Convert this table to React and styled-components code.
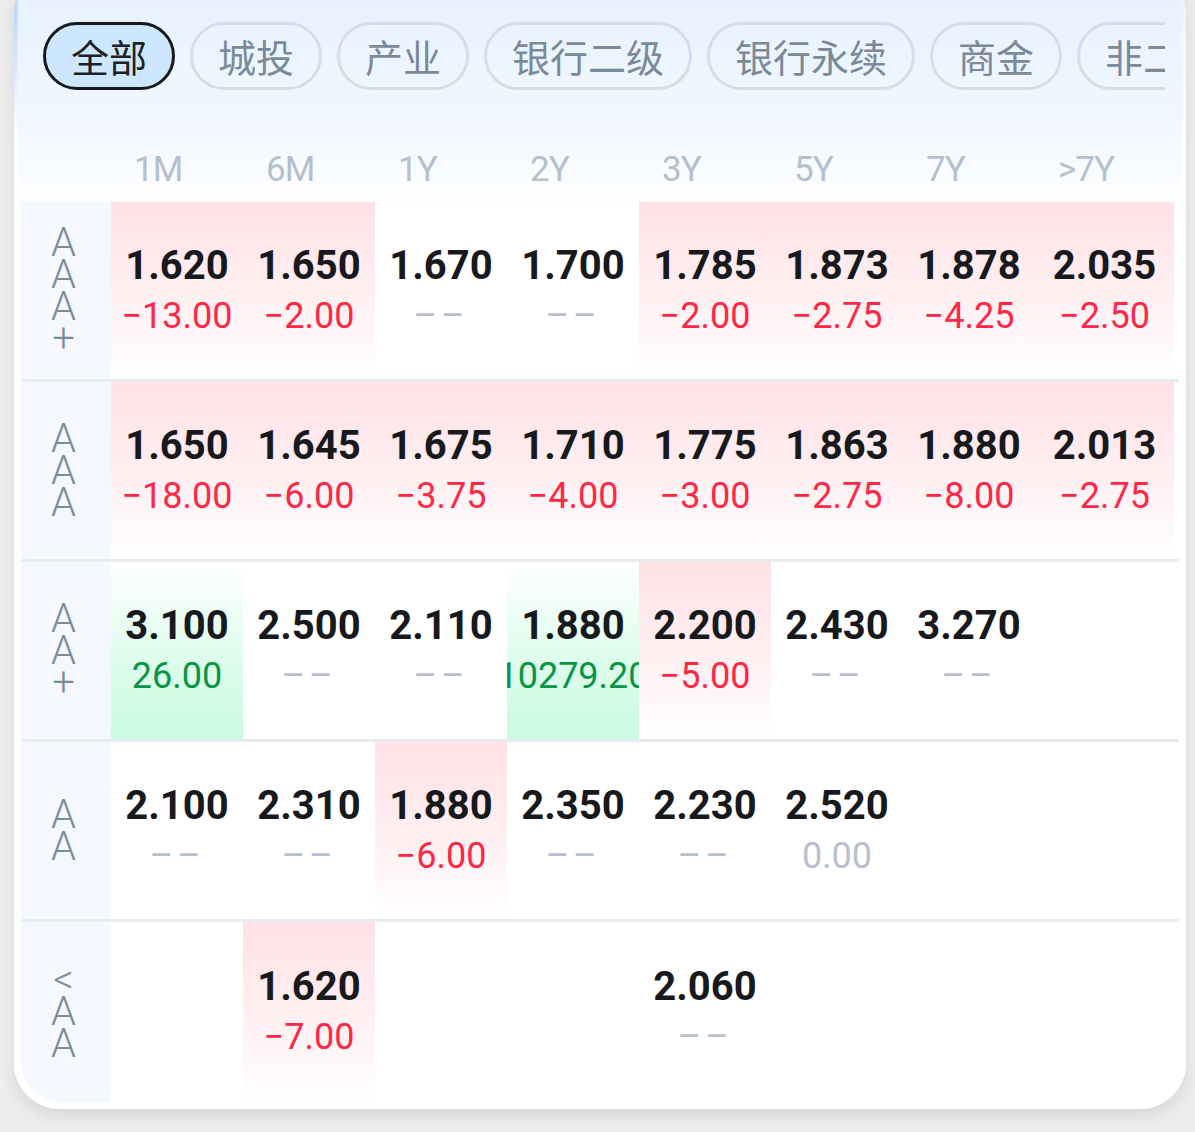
import React from 'react';
import styled, { createGlobalStyle } from 'styled-components';

const GlobalStyle = createGlobalStyle`
  html, body {
    margin: 0;
    padding: 0;
    background: #ededed;
  }
  body {
    font-family: Roboto, "Noto Sans CJK SC", sans-serif;
    overflow: hidden;
  }
`;

const TABS = ['全部', '城投', '产业', '银行二级', '银行永续', '商金', '非二永'];
const TERMS = ['1M', '6M', '1Y', '2Y', '3Y', '5Y', '7Y', '>7Y'];

// each cell: [yield, change, tone]; tone 'up' = pink, 'down' = green
const ROWS = [
    {
        label: 'AAA+',
        cells: [
            ['1.620', '-13.00', 'up'], ['1.650', '-2.00', 'up'], ['1.670', '--'], ['1.700', '--'],
            ['1.785', '-2.00', 'up'], ['1.873', '-2.75', 'up'], ['1.878', '-4.25', 'up'], ['2.035', '-2.50', 'up'],
        ],
    },
    {
        label: 'AAA',
        cells: [
            ['1.650', '-18.00', 'up'], ['1.645', '-6.00', 'up'], ['1.675', '-3.75', 'up'], ['1.710', '-4.00', 'up'],
            ['1.775', '-3.00', 'up'], ['1.863', '-2.75', 'up'], ['1.880', '-8.00', 'up'], ['2.013', '-2.75', 'up'],
        ],
    },
    {
        label: 'AA+',
        cells: [
            ['3.100', '26.00', 'down'], ['2.500', '--'], ['2.110', '--'], ['1.880', '10279.20', 'down'],
            ['2.200', '-5.00', 'up'], ['2.430', '--'], ['3.270', '--'], null,
        ],
    },
    {
        label: 'AA',
        cells: [
            ['2.100', '--'], ['2.310', '--'], ['1.880', '-6.00', 'up'], ['2.350', '--'],
            ['2.230', '--'], ['2.520', '0.00'], null, null,
        ],
    },
    {
        label: '<AA',
        cells: [
            null, ['1.620', '-7.00', 'up'], null, null,
            ['2.060', '--'], null, null, null,
        ],
    },
];

const COLS = '90px repeat(7, 132px) 139px';

const changeKind = (c) => {
    if (c === '--') return 'none';
    if (Number(c) === 0) return 'flat';
    return c.startsWith('-') ? 'neg' : 'pos';
};

const showChange = (c) => {
    if (c === '--') return '––';
    return c.replace('-', '−');
};

class App extends React.Component {

    renderCell(cell, i) {
        if (!cell) {
            return <ValueCell key={i} />;
        }
        const [value, change, tone] = cell;
        return (
            <ValueCell key={i} tone={tone}>
                <Yield>{value}</Yield>
                <Change kind={changeKind(change)}>{showChange(change)}</Change>
            </ValueCell>
        );
    }

    renderRow(row, idx) {
        return (
            <Row key={row.label} first={idx === 0} last={idx === ROWS.length - 1}>
                <LabelCell>
                    <LabelText>{row.label}</LabelText>
                </LabelCell>
                {row.cells.map((c, i) => this.renderCell(c, i))}
            </Row>
        );
    }

    render() {
        return (
            <Page>
                <GlobalStyle />
                <Card>
                    <Inner>
                        <TabBar>
                            {TABS.map((t, i) => (
                                <Tab key={t} active={i === 0}>{t}</Tab>
                            ))}
                        </TabBar>
                        <HeaderRow>
                            <div />
                            {TERMS.map((t) => (
                                <HeaderCell key={t}>{t}</HeaderCell>
                            ))}
                        </HeaderRow>
                        {ROWS.map((r, i) => this.renderRow(r, i))}
                    </Inner>
                </Card>
            </Page>
        );
    }
}

const Page = styled.div`
    padding: 0 9px 24px 14px;
`
const Card = styled.div`
    margin-top: -33px;
    border: 4px solid transparent;
    padding: 3px;
    border-radius: 46px;
    background:
        linear-gradient(180deg, #e5f1ff 0px, #f1f7ff 150px, #fbfdff 215px, #ffffff 260px) padding-box,
        linear-gradient(180deg, rgba(255, 255, 255, 0) 0px, #ffffff 175px) border-box,
        linear-gradient(90deg, #9fc4ff 0px, #b8d5ff 4px, #e5f1ff 4px) border-box;
    box-shadow: 0 7px 16px rgba(0, 0, 0, 0.09);
`
const Inner = styled.div`
    border-radius: 0 0 40px 40px;
    overflow: hidden;
`
const TabBar = styled.div`
    display: flex;
    gap: 15px;
    padding: 48px 0 0 22px;
    margin-right: 14px;
    overflow: hidden;
`
const Tab = styled.div`
    flex: none;
    height: 62px;
    line-height: 62px;
    padding: 0 25px;
    border-radius: 34px;
    border: 3px solid ${p => p.active ? '#17191c' : '#d6dde5'};
    background: ${p => p.active ? '#cde7ff' : 'transparent'};
    color: ${p => p.active ? '#1d2024' : '#7a8a98'};
    font-family: "Noto Sans CJK SC", sans-serif;
    font-size: 38px;
    white-space: nowrap;
`
const HeaderRow = styled.div`
    display: grid;
    grid-template-columns: ${COLS};
    height: 64px;
    margin-top: 48px;
    align-items: center;
`
const HeaderCell = styled.div`
    padding-left: 23px;
    font-size: 35px;
    font-weight: 400;
    letter-spacing: -1px;
    line-height: 36px;
    color: #b5c0ce;
`
const Row = styled.div`
    display: grid;
    grid-template-columns: ${COLS};
    height: ${p => p.last ? '180px' : '177px'};
    border-top: ${p => p.first ? 'none' : '3px solid #e7ecf1'};
    background: #ffffff;
`
const LabelCell = styled.div`
    display: flex;
    align-items: center;
    justify-content: center;
    background: #f5f9ff;
    padding-right: 5px;
`
const LabelText = styled.div`
    width: 30px;
    word-break: break-all;
    text-align: center;
    font-size: 40px;
    font-weight: 300;
    line-height: 32px;
    color: #7d8e9b;
`
const ValueCell = styled.div`
    display: flex;
    flex-direction: column;
    align-items: center;
    justify-content: center;
    overflow: hidden;
    background: ${p => p.tone === 'up'
        ? 'linear-gradient(180deg, #ffe1e6 0%, #fff0f2 55%, #ffffff 100%)'
        : p.tone === 'down'
            ? 'linear-gradient(180deg, #ffffff 0%, #e3fdef 45%, #c9fbdf 100%)'
            : 'transparent'};
`
const Yield = styled.div`
    font-size: 40px;
    font-weight: 700;
    line-height: 51px;
    color: #18191d;
    white-space: nowrap;
`
const Change = styled.div`
    font-size: 36px;
    font-weight: 400;
    line-height: 51px;
    white-space: nowrap;
    letter-spacing: ${p => p.kind === 'none' ? '4px' : '0'};
    color: ${p => p.kind === 'neg' ? '#ff2748' : p.kind === 'pos' ? '#0a9447' : '#b7c0ce'};
`

export default App;
